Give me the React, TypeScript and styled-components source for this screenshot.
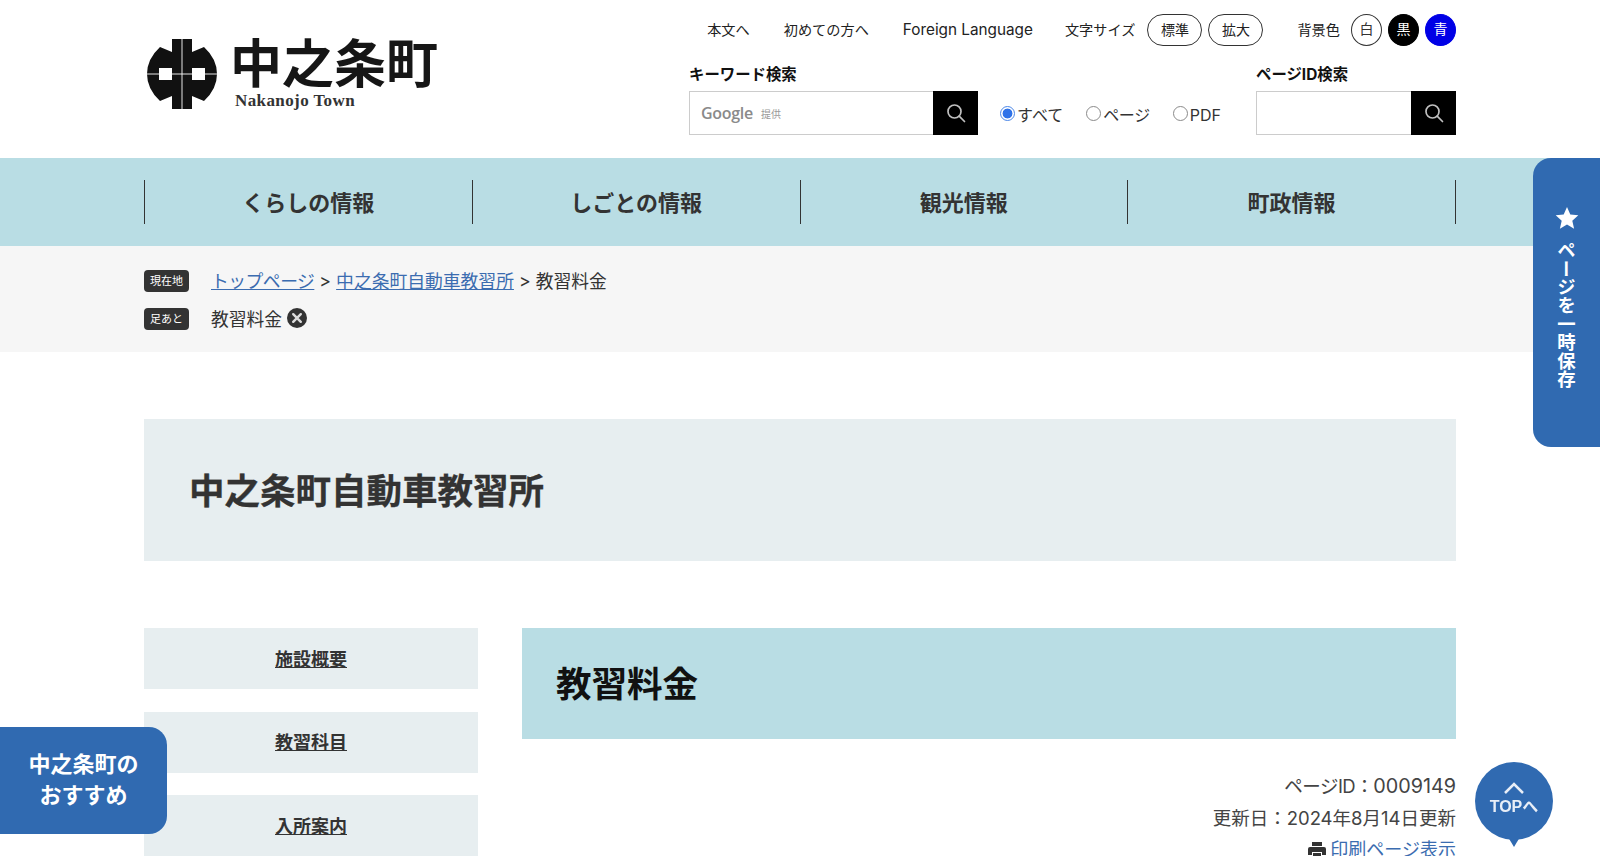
import React from "react";
import styled, { createGlobalStyle } from "styled-components";

const Global = createGlobalStyle`
  html, body { margin: 0; padding: 0; height: 856px; overflow: hidden; background: #fff; }
  body { font-family: Inter, "Noto Sans CJK JP", "Noto Sans", sans-serif; color: #333; }
  * { box-sizing: border-box; }
`;

const Page = styled.div`height: 856px; overflow: hidden;`;
const Inner = styled.div`width: 1312px; margin: 0 auto;`;

const HeaderWrap = styled(Inner)`
  height: 158px;
  display: flex;
  justify-content: space-between;
`;
const Logo = styled.div`
  display: flex;
  align-items: flex-start;
  gap: 13px;
  padding: 39px 0 0 3px;
`;
const LogoText = styled.div`
  display: flex;
  flex-direction: column;
  color: #161616;
  margin-top: -4px;
`;
const LogoJa = styled.span`
  font-family: "Noto Sans CJK JP", sans-serif;
  font-size: 52px;
  font-weight: 700;
  line-height: 52px;
`;
const LogoEn = styled.span`
  font-family: "Liberation Serif", serif;
  font-weight: 700;
  font-size: 17px;
  line-height: 20px;
  margin-top: 4px;
  margin-left: 5px;
  letter-spacing: 0.4px;
  color: #333;
`;
const HeadRight = styled.div`
  width: 767px;
  display: flex;
  flex-direction: column;
`;
const TopRow = styled.div`
  height: 64px;
  padding-top: 14px;
  display: flex;
  align-items: flex-start;
  justify-content: flex-end;
  font-size: 14.2px;
  color: #222;
`;
const TopLink = styled.span<{ $gap: number; $latin?: boolean }>`
  line-height: 31px;
  margin-right: ${(p) => p.$gap}px;
  font-size: ${(p) => (p.$latin ? "15.3px" : "inherit")};
`;
const PillButton = styled.span<{ $gap: number }>`
  width: 55px;
  height: 32px;
  border: 1.5px solid #333;
  border-radius: 16px;
  text-align: center;
  line-height: 29px;
  font-size: 14px;
  margin-right: ${(p) => p.$gap}px;
`;
const Dot = styled.span<{ $bg: string; $fg: string }>`
  width: 31px;
  height: 32px;
  border-radius: 50%;
  border: 1.5px solid ${(p) => (p.$bg === "#fff" ? "#333" : p.$bg)};
  background: ${(p) => p.$bg};
  color: ${(p) => p.$fg};
  text-align: center;
  line-height: 28px;
  font-size: 14px;
  margin-right: 6px;
  &:last-child { margin-right: 0; }
`;
const SearchRow = styled.div`
  display: flex;
  align-items: flex-end;
  justify-content: space-between;
`;
const SearchBlock = styled.div`display: flex; flex-direction: column;`;
const SearchLabel = styled.div`
  font-size: 15.4px;
  font-weight: 700;
  line-height: 22px;
  height: 17px;
  margin-bottom: 10px;
  color: #111;
`;
const SearchBox = styled.div`display: flex; height: 44px;`;
const SearchInput = styled.div<{ $w: number }>`
  width: ${(p) => p.$w}px;
  border: 1px solid #ccc;
  border-right: 0;
  display: flex;
  align-items: center;
  padding-left: 11px;
  gap: 8px;
`;
const GoogleMark = styled.span`
  font-family: "Open Sans", sans-serif;
  font-size: 16px;
  font-weight: 600;
  color: #8a8a8a;
  letter-spacing: -0.3px;
`;
const GoogleNote = styled.span`font-size: 10px; color: #999;`;
const SearchBtn = styled.div<{ $w: number }>`
  width: ${(p) => p.$w}px;
  background: #000;
  display: flex;
  align-items: center;
  justify-content: center;
`;
const Radios = styled.div`
  display: flex;
  align-items: center;
  height: 44px;
  font-size: 16px;
  color: #333;
  padding-left: 22px;
  flex: 1;
`;
const RadioItem = styled.label<{ $tight?: boolean }>`
  display: flex;
  align-items: center;
  margin-right: 23px;
  padding-top: 4px;
  line-height: 20px;
  letter-spacing: ${(p) => (p.$tight ? "-0.4px" : "0")};
`;
const RadioCircle = styled.span<{ $on?: boolean }>`
  width: 15px;
  height: 15px;
  border-radius: 50%;
  margin-right: 2px;
  margin-top: -3px;
  border: 1px solid ${(p) => (p.$on ? "#4a86e8" : "#8a8a8a")};
  background: ${(p) => (p.$on ? "radial-gradient(circle, #2f72e8 0 4.7px, #fff 5.2px)" : "#fff")};
`;

const Nav = styled.nav`
  height: 88px;
  background: #b9dde4;
  display: flex;
  align-items: center;
`;
const NavRow = styled(Inner)`
  display: flex;
  border-right: 1px solid #333;
`;
const NavItem = styled.div`
  flex: 1;
  height: 44px;
  padding-bottom: 2px;
  border-left: 1px solid #333;
  display: flex;
  align-items: center;
  justify-content: center;
  font-family: "Noto Sans CJK JP", sans-serif;
  font-size: 22px;
  font-weight: 700;
  color: #333;
`;

const Crumbs = styled.div`
  height: 106px;
  background: #f6f6f6;
  padding-top: 22px;
`;
const CrumbRow = styled.div`
  display: flex;
  align-items: center;
  height: 24px;
  margin-bottom: 14px;
  font-size: 17.8px;
  color: #333;
`;
const CrumbTag = styled.span`
  width: 45px;
  height: 22px;
  background: #333;
  color: #fff;
  border-radius: 4px;
  font-size: 11px;
  line-height: 22px;
  text-align: center;
  margin: 1px 22px 0 0;
`;
const CrumbLink = styled.span<{ $tight?: boolean }>`
  color: #3b6cb0;
  text-decoration: underline;
  letter-spacing: ${(p) => (p.$tight ? "-0.5px" : "0")};
`;
const Sep = styled.span`margin: 0 5px;`;
const CloseIcon = styled.span`
  display: inline-flex;
  margin-left: 5px;
`;

const TitleBox = styled(Inner)`
  height: 142px;
  margin-top: 67px;
  padding: 0 0 2px 45px;
  background: #e7eef0;
  display: flex;
  align-items: center;
`;
const Title = styled.h1`
  margin: 0;
  font-family: "Noto Sans CJK JP", sans-serif;
  font-size: 35.5px;
  font-weight: 700;
  color: #333;
  line-height: 1.2;
  -webkit-text-stroke: 0.3px #333;
`;
const Columns = styled(Inner)`
  margin-top: 67px;
  display: flex;
  align-items: flex-start;
  gap: 44px;
`;
const Side = styled.div`
  width: 334px;
  flex: none;
  display: flex;
  flex-direction: column;
  gap: 22.5px;
`;
const SideItem = styled.div`
  height: 61px;
  padding-bottom: 2px;
  background: #e7eef0;
  display: flex;
  align-items: center;
  justify-content: center;
  font-family: "Noto Sans CJK JP", sans-serif;
  font-size: 18px;
  font-weight: 700;
  color: #333;
  text-decoration: underline;
`;
const Main = styled.div`flex: 1;`;
const SubTitle = styled.h2`
  margin: 0;
  height: 111px;
  padding: 0 0 4px 34px;
  background: #b9dde4;
  display: flex;
  align-items: center;
  font-family: "Noto Sans CJK JP", sans-serif;
  font-size: 35.5px;
  font-weight: 700;
  color: #111;
`;
const Meta = styled.div`
  margin-top: 31px;
  text-align: right;
  font-size: 18.5px;
  line-height: 32px;
  color: #444;
`;
const PageIdLine = styled.div`letter-spacing: -0.5px;`;
const PageIdNumber = styled.span`
  font-size: 19.8px;
  letter-spacing: 0;
`;
const PrintLink = styled.div`
  display: flex;
  justify-content: flex-end;
  align-items: center;
  gap: 4px;
  color: #3b6cb0;
  font-size: 18px;
  text-decoration: underline;
`;

const SaveTab = styled.div`
  position: fixed;
  right: 0;
  top: 158px;
  width: 67px;
  height: 289px;
  background: #306ab1;
  border-radius: 18px 0 0 18px;
  color: #fff;
  display: flex;
  flex-direction: column;
  align-items: center;
  padding-top: 48px;
`;
const SaveText = styled.span`
  writing-mode: vertical-rl;
  font-family: "Noto Sans CJK JP", sans-serif;
  font-size: 18.4px;
  font-weight: 700;
  line-height: 20px;
  margin-top: 11px;
`;
const RecTab = styled.div`
  position: fixed;
  left: 0;
  top: 727px;
  width: 167px;
  height: 107px;
  padding-bottom: 6px;
  background: #306ab1;
  border-radius: 0 18px 18px 0;
  color: #fff;
  font-family: "Noto Sans CJK JP", sans-serif;
  font-size: 22px;
  font-weight: 700;
  line-height: 31px;
  display: flex;
  align-items: center;
  justify-content: center;
  text-align: center;
`;
const TopBtn = styled.div`
  position: fixed;
  left: 1475px;
  top: 762px;
  width: 78px;
  height: 78px;
  background: #306ab1;
  border-radius: 50%;
  color: #e8eef7;
  display: flex;
  flex-direction: column;
  align-items: center;
  padding-top: 19px;
  font-family: "Liberation Sans", "Noto Sans CJK JP", sans-serif;
  font-size: 16px;
  font-weight: 700;
  line-height: 16px;
  &::after {
    content: "";
    position: absolute;
    left: 33px;
    bottom: -7px;
    border-left: 6px solid transparent;
    border-right: 6px solid transparent;
    border-top: 10px solid #306ab1;
  }
`;
const TopChevron = styled.svg`display: block; margin-bottom: 5px;`;

const Search = ({ size = 20 }: { size?: number }) => (
  <svg width={size} height={size} viewBox="0 0 20 20" fill="none" stroke="#c0c0c0" strokeWidth="1.7">
    <circle cx="8.5" cy="8.5" r="6.5" />
    <path d="M13.2 13.2 L18.5 18.5" strokeLinecap="round" />
  </svg>
);

const Emblem = () => (
  <svg width="70" height="70" viewBox="0 0 70 70">
    <path
      fill="#111"
      fillRule="evenodd"
      d="M25 0H45V13L57 8Q70 20 70 35Q70 50 57 62L45 57V70H25V57L13 62Q0 50 0 35Q0 20 13 8L25 13ZM12 29V41H25V29ZM45 29V41H58V29Z"
    />
    <path stroke="#fff" strokeWidth="0.9" d="M0 35H70M35 0V70" fill="none" />
  </svg>
);

export default function App() {
  return (
    <Page>
      <Global />
      <HeaderWrap>
        <Logo>
          <Emblem />
          <LogoText>
            <LogoJa>中之条町</LogoJa>
            <LogoEn>Nakanojo Town</LogoEn>
          </LogoText>
        </Logo>
        <HeadRight>
          <TopRow>
            <TopLink $gap={34}>本文へ</TopLink>
            <TopLink $gap={34}>初めての方へ</TopLink>
            <TopLink $gap={32} $latin>Foreign Language</TopLink>
            <TopLink $gap={12}>文字サイズ</TopLink>
            <PillButton $gap={6}>標準</PillButton>
            <PillButton $gap={34}>拡大</PillButton>
            <TopLink $gap={11}>背景色</TopLink>
            <Dot $bg="#fff" $fg="#333">白</Dot>
            <Dot $bg="#000" $fg="#fff">黒</Dot>
            <Dot $bg="#0000e6" $fg="#fff">青</Dot>
          </TopRow>
          <SearchRow>
            <SearchBlock>
              <SearchLabel>キーワード検索</SearchLabel>
              <SearchBox>
                <SearchInput $w={244}>
                  <GoogleMark>Google</GoogleMark>
                  <GoogleNote>提供</GoogleNote>
                </SearchInput>
                <SearchBtn $w={45}><Search /></SearchBtn>
              </SearchBox>
            </SearchBlock>
            <Radios>
              <RadioItem><RadioCircle $on />すべて</RadioItem>
              <RadioItem $tight><RadioCircle />ページ</RadioItem>
              <RadioItem><RadioCircle />PDF</RadioItem>
            </Radios>
            <SearchBlock>
              <SearchLabel>ページID検索</SearchLabel>
              <SearchBox>
                <SearchInput $w={155} />
                <SearchBtn $w={45}><Search /></SearchBtn>
              </SearchBox>
            </SearchBlock>
          </SearchRow>
        </HeadRight>
      </HeaderWrap>
      <Nav>
        <NavRow>
          <NavItem>くらしの情報</NavItem>
          <NavItem>しごとの情報</NavItem>
          <NavItem>観光情報</NavItem>
          <NavItem>町政情報</NavItem>
        </NavRow>
      </Nav>
      <Crumbs>
        <Inner>
          <CrumbRow>
            <CrumbTag>現在地</CrumbTag>
            <CrumbLink $tight>トップページ</CrumbLink>
            <Sep>&gt;</Sep>
            <CrumbLink>中之条町自動車教習所</CrumbLink>
            <Sep>&gt;</Sep>
            <span>教習料金</span>
          </CrumbRow>
          <CrumbRow>
            <CrumbTag>足あと</CrumbTag>
            <span>教習料金</span>
            <CloseIcon>
              <svg width="20" height="20" viewBox="0 0 20 20">
                <circle cx="10" cy="10" r="10" fill="#333" />
                <path d="M6.200 6.200 13.800 13.800M13.800 6.200 6.200 13.800" stroke="#ddd" strokeWidth="2.400" strokeLinecap="round" />
              </svg>
            </CloseIcon>
          </CrumbRow>
        </Inner>
      </Crumbs>
      <TitleBox>
        <Title>中之条町自動車教習所</Title>
      </TitleBox>
      <Columns>
        <Side>
          <SideItem>施設概要</SideItem>
          <SideItem>教習科目</SideItem>
          <SideItem>入所案内</SideItem>
        </Side>
        <Main>
          <SubTitle>教習料金</SubTitle>
          <Meta>
            <PageIdLine>ページID：<PageIdNumber>0009149</PageIdNumber></PageIdLine>
            <div>更新日：2024年8月14日更新</div>
            <PrintLink>
              <svg width="18" height="18" viewBox="0 0 18 18" fill="#333">
                <path d="M4 1h10v4H4zM2 6h14a2 2 0 0 1 2 2v6h-4v-3H4v3H0V8a2 2 0 0 1 2-2zM5 12h8v5H5z" />
              </svg>
              <span>印刷ページ表示</span>
            </PrintLink>
          </Meta>
        </Main>
      </Columns>
      <SaveTab>
        <svg width="24" height="24" viewBox="0 0 24 24" fill="#fff">
          <path d="M12 1l3.300 7.500 8 .8-6 5.400 1.800 8L12 18.500 4.900 22.700l1.800-8-6-5.400 8-.8z" />
        </svg>
        <SaveText>ページを一時保存</SaveText>
      </SaveTab>
      <RecTab>
        中之条町の
        <br />
        おすすめ
      </RecTab>
      <TopBtn>
        <TopChevron width="22" height="13" viewBox="0 0 22 13" fill="none" stroke="#e8eef7" strokeWidth="2.500">
          <path d="M2 12 11 3l9 9" />
        </TopChevron>
        TOPへ
      </TopBtn>
    </Page>
  );
}
